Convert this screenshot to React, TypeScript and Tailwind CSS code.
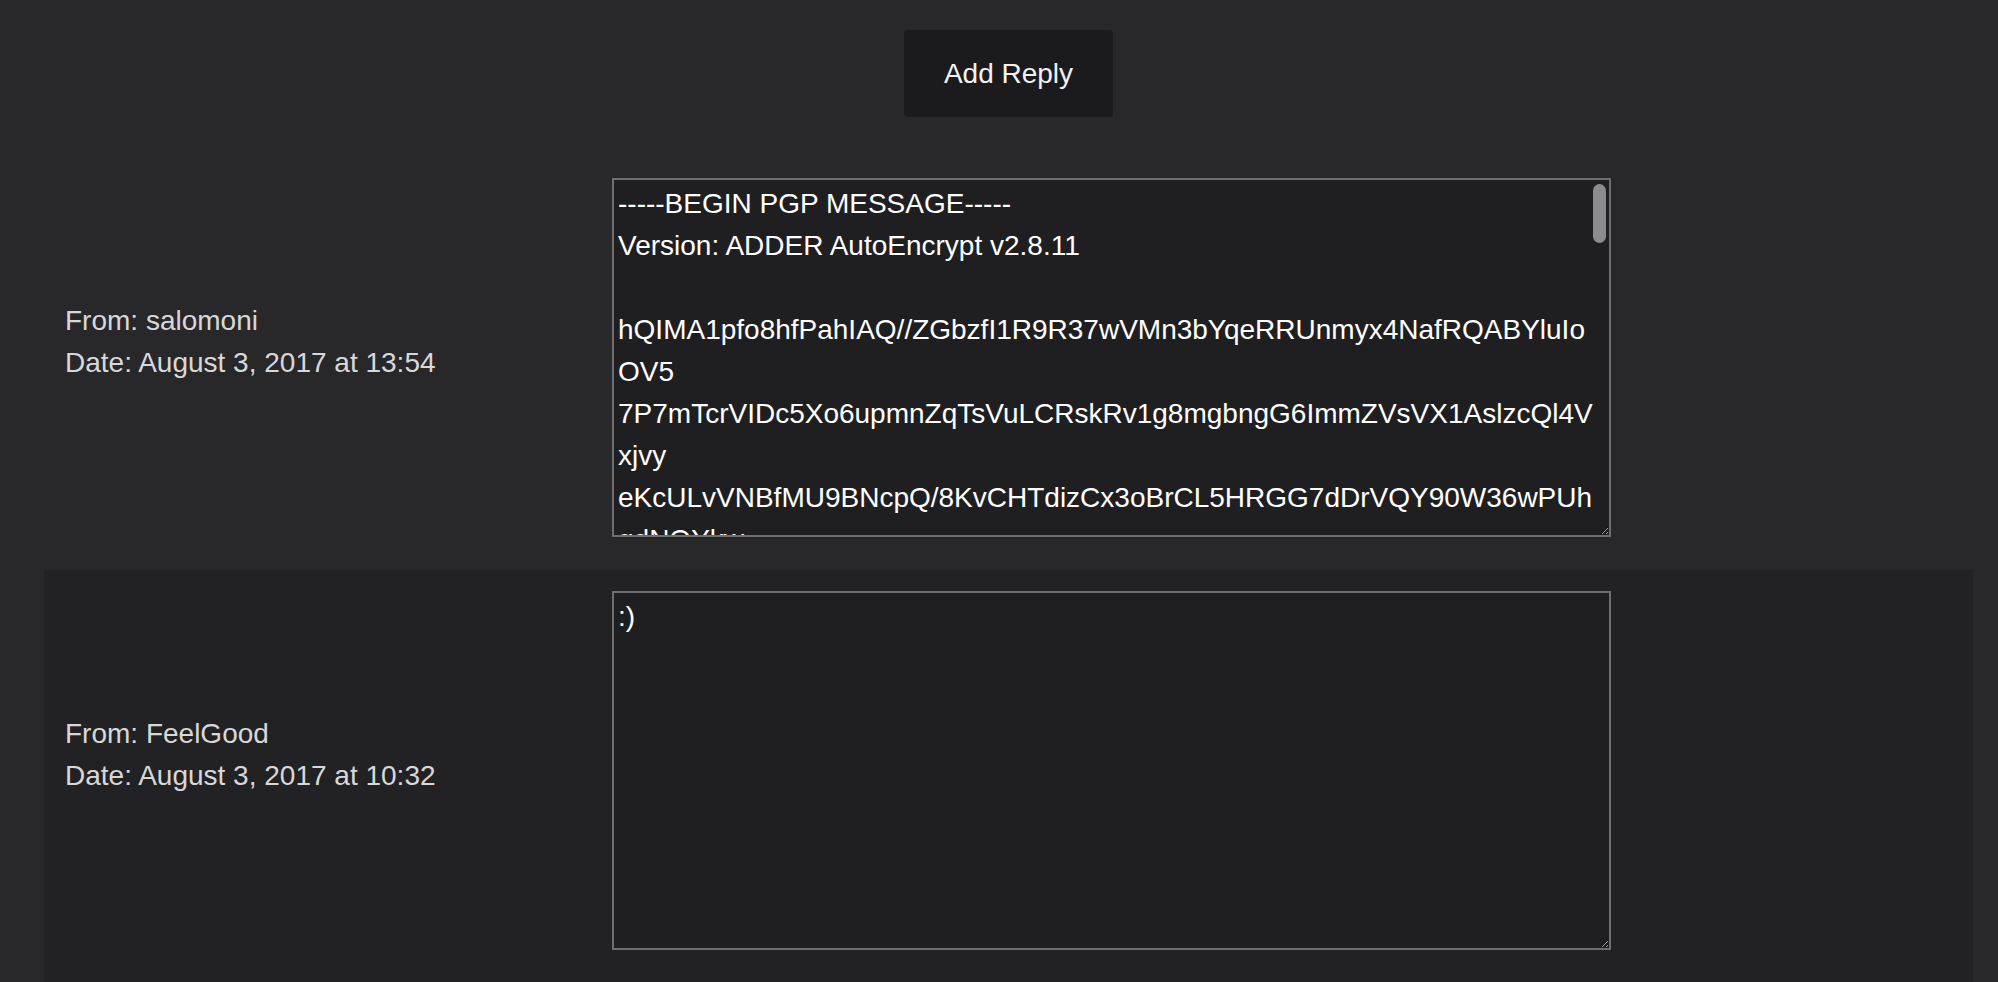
import React from 'react';

const PGP_BODY = [
  '-----BEGIN PGP MESSAGE-----',
  'Version: ADDER AutoEncrypt v2.8.11',
  '',
  'hQIMA1pfo8hfPahIAQ//ZGbzfI1R9R37wVMn3bYqeRRUnmyx4NafRQABYluIoOV5',
  '7P7mTcrVIDc5Xo6upmnZqTsVuLCRskRv1g8mgbngG6ImmZVsVX1AslzcQl4Vxjvy',
  'eKcULvVNBfMU9BNcpQ/8KvCHTdizCx3oBrCL5HRGG7dDrVQY90W36wPUhgdNQYkw',
  'Jd3Xq0pLr8vTmW2nKc7sHfY4uEo1GbZiRtA9yVwC6xNlP5hQjDsM3eUaF8kOgIBr',
  'T2mV9cLpQx4WsN7fKjYe1oHdRb6uGzA0iEtXyM8nCvl3qS5wPkUaJhF2gDrO9IcB',
  'y4nZkQ7sWm1pVxTf0cLbH8eJrG3uYaN6oKdiE2tMw5qPvR9gCjXlUhO1BsFzIA7D',
  'fR3kLp8xNq2vMb7cTsZy0wHeGj5uYiA1oKd9nEtXrWl6QmCgVhJ4PzaBIOf2Ucs3',
  'Wm8QzLt1pXb4vNy6cRkH0sGeJf2uDaT9oIi5nMwE3lYqK7rCgVhP8jBZzAOUx1Fd',
  'a6Lp0NcXv3kQ9tMs2yWbHr7fGe4uJiZ1oDn8EwKq5lYmT6gCxVhRjP0zBIOaUs9f',
  'Gh2Kd7wMx1pQrVt4bNs9cLyZ6eHfJo3uAiW0kEg5nTqR8lYmC2vXjPzBaIODUs7c',
  'p5Rq1XmZ8LtNv0cWb3kHs6yGeJf9oDuA2iTiEn4MwK7lYqC1rVgPhjBzaIOxUs6d',
  'N9sLkVt3pQxWm2cZb7yRfHe0uGjJ5oAiD1nEiTw8MqK4lYrC6gVhPjzBaIOUxs2f',
  'e4Tz1KpMq9XvNb6cLs3yWhRf8GuJe0oDaI5iEtn2wMkQ7lYrC1gVxPjhBzaOIUs9',
  'Bf6QsLm2pXvTk0cNz8yWbHr5GeJf3uDoAiI1ntEw4MqKl7YrCg9VhPxjBzaIOUs2',
  'h3Wq7LkNp1XvMt9cZs6yRbHf0eGjJu4oDaIi2nEtwM8qKl5YrCg1VxPhBjzaIOUs',
  'Zx8PmKq2LtVn4cXb0sRyH7eGfJu1oDiAa3nEitW9wMkQl6YrCg5VhPxjBzOIUsa0',
  'k1Nv5RmXq9LpTc3bWzs7yHeGf0JuDo2iAi4nEtwM6qKl8YrCg1VhPxjzBaIOUs7f',
  'Qy0Lm4KpX1vNt7cZbs2RwHf9eGjJu5oDaIi3nEtwM8qKl6YrCg0VhPxBjzaIOU4s',
  'r2Vt8MkQp6XnLb1cZs9yWhRf3GeJu7oDiAa0nEitwM5qKl2YrCg4VhPxjBzaIOUs',
  'X7mLq3KpN0vTb5cWzs1yRhHf6eGjJu9oDaIi8nEtwM2qKl4YrCg7VhPxBjzaOIUs',
  '=Kp4T',
  '-----END PGP MESSAGE-----',
].join('\n');

/* ─── Message row ───────────────────────────────────── */
function MessageRow({
  from,
  date,
  body,
  shaded,
  scrollable,
}: {
  from: string;
  date: string;
  body: string;
  shaded?: boolean;
  scrollable?: boolean;
}) {
  return (
    <div className={`flex items-center pt-[21px] pb-[33px] ${shaded ? 'bg-[#222225]' : ''}`}>
      {/* Sender + date */}
      <div className="w-[568px] shrink-0 pl-[21px] pb-[31px] text-[28px] leading-[42px] text-[#d8d8d8]">
        <div>From: {from}</div>
        <div>Date: {date}</div>
      </div>

      {/* Message body */}
      <div className="relative shrink-0">
        <textarea
          readOnly
          defaultValue={body}
          className="
            w-[999px] h-[359px] block
            bg-[#1f1f22] text-white text-[28px] leading-[42px]
            border-2 border-solid border-[#6e6e6e] pt-[3px] pl-[4px] pr-[16px] pb-[2px]
            resize outline-none [color-scheme:dark]
          "
          style={{ fontFamily: '"Liberation Sans", Arial, sans-serif' }}
        />
        {/* overlay scroll thumb */}
        {scrollable && (
          <div className="absolute left-[981px] top-[6px] w-[13px] h-[59px] rounded-full bg-[#8c8c8c] pointer-events-none" />
        )}
      </div>
    </div>
  );
}

export default function App() {
  return (
    <div className="min-h-screen bg-[#28282b] font-['Liberation_Sans',Arial,sans-serif] overflow-hidden">
      <div className="ml-[44px] mr-[25px]">
        {/* Add reply */}
        <div className="flex justify-center pt-[30px] pb-[40px]">
          <button className="w-[209px] h-[87px] flex items-center justify-center rounded-[4px] bg-[#1b1b1e] text-[28px] text-[#f2f2f2] cursor-pointer">
            Add Reply
          </button>
        </div>

        <MessageRow from="salomoni" date="August 3, 2017 at 13:54" body={PGP_BODY} scrollable />
        <MessageRow from="FeelGood" date="August 3, 2017 at 10:32" body=":)" shaded />
      </div>
    </div>
  );
}
